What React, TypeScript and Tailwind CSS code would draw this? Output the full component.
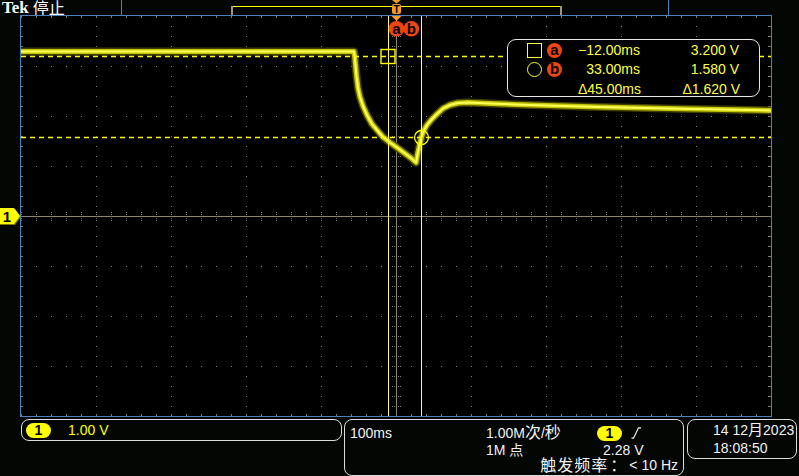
import React from "react";

const GRID = "#857c68";

const wave: [number, number][] = [
  [21, 51.5], [354, 51.5], [354.8, 58], [355.6, 66], [356.5, 76], [358, 88], [360, 97],
  [363, 106], [367, 115], [372, 124], [377, 130], [383, 137], [390, 142.5], [397, 147.5],
  [405, 153.5], [411, 158], [416, 162.5], [418, 152], [420, 143], [421.5, 137], [423.5, 131],
  [427, 125], [432, 119], [437, 114], [443, 108.5], [450, 105], [458, 103], [468, 102.5],
  [490, 103.5], [530, 105], [600, 107], [680, 108.8], [771, 110.5],
];

function PlotSvg() {
  const vx = [-4, -3, -2, -1, 1, 2, 3, 4].map((k) => Math.round(396 + 75.1 * k) + 0.5);
  const hy = [-3, -2, -1, 1, 2, 3].map((k) => Math.round(216 + 50.1 * k) + 0.5);
  const d = "M" + wave.map((p) => p.join(" ")).join(" L");
  const topTicks: number[] = [];
  for (let x = 21; x <= 770; x += 15) topTicks.push(x + 0.5);
  const sideTicks: number[] = [];
  for (let y = 26; y <= 410; y += 10) sideTicks.push(y + 0.5);
  return (
    <svg width={750} height={400} viewBox="21 16 750 400" className="block">
      {vx.map((x) => (
        <line key={"v" + x} x1={x} x2={x} y1={16} y2={416} stroke={GRID} strokeDasharray="1 9" />
      ))}
      {hy.map((y) => (
        <line key={"h" + y} x1={21} x2={771} y1={y} y2={y} stroke={GRID} strokeDasharray="1 14" />
      ))}
      <line x1={21} x2={771} y1={216.5} y2={216.5} stroke="#8f866f" />
      <line x1={396.5} x2={396.5} y1={16} y2={416} stroke="#8f866f" />
      {topTicks.map((x) => (
        <g key={"t" + x}>
          <line x1={x} x2={x} y1={16} y2={18} stroke={GRID} />
          <line x1={x} x2={x} y1={414} y2={416} stroke={GRID} />
          <line x1={x} x2={x} y1={212} y2={221} stroke={GRID} strokeDasharray="1 1" />
        </g>
      ))}
      {sideTicks.map((y) => (
        <g key={"s" + y}>
          <line x1={21} x2={23} y1={y} y2={y} stroke={GRID} />
          <line x1={768} x2={771} y1={y} y2={y} stroke={GRID} />
          <line x1={392} x2={401} y1={y} y2={y} stroke={GRID} strokeDasharray="1 1" />
        </g>
      ))}
      <path d={d} fill="none" stroke="#4a4a00" strokeWidth={8} strokeLinejoin="round" opacity={0.85} />
      <path d={d} fill="none" stroke="#c4c400" strokeWidth={5} strokeLinejoin="round" />
      <path d={d} fill="none" stroke="#ffff5c" strokeWidth={2} strokeLinejoin="round" />
      <line x1={21} x2={771} y1={56.5} y2={56.5} stroke="#ffff00" strokeWidth={1.3} strokeDasharray="5 4" />
      <line x1={21} x2={771} y1={137.5} y2={137.5} stroke="#ffff00" strokeWidth={1.3} strokeDasharray="5 4" />
      <line x1={388.5} x2={388.5} y1={16} y2={416} stroke="#ffff66" />
      <line x1={421.5} x2={421.5} y1={16} y2={416} stroke="#ffff66" />
      <rect x={381} y={49.5} width={14} height={14} fill="none" stroke="#ffff00" strokeWidth={1.4} />
      <circle cx={421.5} cy={137.5} r={7} fill="none" stroke="#ffff00" strokeWidth={1.3} />
    </svg>
  );
}

function OrangeDot({ ch }: { ch: string }) {
  return (
    <div className="w-[15px] h-[15px] rounded-full bg-[#f2440f] text-black font-bold text-[15px] leading-[14px] text-center">
      {ch}
    </div>
  );
}

function Readout() {
  return (
    <div className="absolute left-[486px] top-[23px] w-[253px] h-[58px] rounded-[9px] border border-[#e8e8e8] bg-black text-[#ffff40] text-[14px]">
      <div className="pt-[1px]">
        <div className="flex items-center h-[18px]">
          <div className="ml-[19px] w-[15px] h-[15px] border-[1.5px] border-[#ffff40]" />
          <div className="ml-[5px]"><OrangeDot ch="a" /></div>
          <div className="w-[78px] text-right">−12.00ms</div>
          <div className="w-[99px] text-right">3.200 V</div>
        </div>
        <div className="flex items-center h-[20px]">
          <div className="ml-[19px] w-[15px] h-[15px] rounded-full border-[1.5px] border-[#ffff40]" />
          <div className="ml-[5px]"><OrangeDot ch="b" /></div>
          <div className="w-[78px] text-right">33.00ms</div>
          <div className="w-[99px] text-right">1.580 V</div>
        </div>
        <div className="flex items-center h-[20px]">
          <div className="ml-[51px] w-[82px] text-right">Δ45.00ms</div>
          <div className="w-[99px] text-right">Δ1.620 V</div>
        </div>
      </div>
    </div>
  );
}

function Pill() {
  return (
    <div className="w-[25px] h-[15px] rounded-full bg-[#ffff00] text-black font-bold text-[14px] leading-[15px] text-center">
      1
    </div>
  );
}

export default function App() {
  return (
    <div className="w-[799px] h-[476px] bg-[#030603] overflow-hidden relative [font-family:'Liberation_Sans','Noto_Sans_CJK_SC',sans-serif] text-[14px]">
      {/* top bar */}
      <div className="h-[15px] flex items-start">
        <div className="w-[121px] h-[15px] flex items-start text-white">
          <span className="ml-[2px] text-[17px] font-bold leading-[15px] [font-family:'Liberation_Serif',serif]">Tek</span>
          <span className="ml-[4px] text-[16px] leading-[14px] [font-family:'Noto_Sans_CJK_SC',sans-serif]">停止</span>
        </div>
        <div className="w-[548px] h-[15px] border-x border-[#4b82bd]">
          <div className="ml-[109px] w-[331px] h-[14px] border-x-2 border-[#a39677]">
            <div className="mt-[6px] h-px bg-[#ffff00]" />
          </div>
        </div>
      </div>

      {/* middle */}
      <div className="flex h-[402px]">
        <div className="w-[20px] relative">
          <svg className="absolute left-0 top-[193px]" width={21} height={18} viewBox="0 0 21 18">
            <polygon points="0,1 15,1 21,9 15,17 0,17" fill="#7a7a00" />
            <polygon points="0,0 14,0 20,8 14,16 0,16" fill="#ffff00" />
            <text x={7} y={13.5} textAnchor="middle" fontSize={15} fontWeight={700} fill="#000" fontFamily="Liberation Sans, sans-serif">1</text>
          </svg>
        </div>
        <div className="w-[752px] h-[402px] border border-[#4b82bd] bg-black relative">
          <PlotSvg />
          <Readout />
        </div>
      </div>

      {/* trigger + cursor markers overlay */}
      <svg className="absolute left-[380px] top-0" width={45} height={40} viewBox="380 0 45 40">
        <polygon points="392,0 401,0 396.5,3.5" fill="#f59a23" />
        <rect x={392} y={4} width={9} height={10} rx={2} fill="#f59a23" />
        <text x={396.5} y={12.5} textAnchor="middle" fontSize={10} fontWeight={700} fill="#000" fontFamily="Liberation Sans, sans-serif">T</text>
        <polygon points="391.5,16 401.5,16 396.5,21" fill="#f59a23" />
        <circle cx={396.5} cy={28.8} r={7.8} fill="#f2440f" />
        <circle cx={411.3} cy={28.8} r={7.8} fill="#f2440f" />
        <text x={396.5} y={33.5} textAnchor="middle" fontSize={15} fontWeight={700} fill="#000" fontFamily="Liberation Sans, sans-serif">a</text>
        <text x={411.3} y={34} textAnchor="middle" fontSize={15} fontWeight={700} fill="#000" fontFamily="Liberation Sans, sans-serif">b</text>
      </svg>

      {/* bottom bar */}
      <div className="flex items-start pt-[2px] h-[57px]">
        <div className="ml-[21px] w-[321px] h-[22px] rounded-[8px] border border-[#dcdcdc] flex items-center">
          <div className="ml-[4px]"><Pill /></div>
          <span className="ml-[17px] text-[#ffff00]">1.00 V</span>
        </div>
        <div className="ml-[2px] w-[340px] h-[57px] rounded-[8px] border border-[#dcdcdc] text-[#f2f2f2] pt-[1px]">
          <div className="grid grid-cols-[141px_111px_1fr] h-[19px] items-center">
            <span className="pl-[5px]">100ms</span>
            <span>1.00M<span className="text-[16px]">次</span>/<span className="text-[16px]">秒</span></span>
            <div className="flex items-center">
              <Pill />
              <svg className="ml-[9px]" width={11} height={12} viewBox="0 0 11 12">
                <path d="M0.5 11.2 H2.5 L7.5 0.8 H10" fill="none" stroke="#f2f2f2" strokeWidth={1.2} />
              </svg>
            </div>
          </div>
          <div className="grid grid-cols-[141px_111px_1fr] h-[16px] items-center">
            <span />
            <span>1M 点</span>
            <span className="pl-[6px]">2.28 V</span>
          </div>
          <div className="h-[19px] flex items-center justify-end pr-[5px]">
            <span className="text-[16px] tracking-[1px]">触发频率</span>
            <span className="ml-[2px] text-[16px]">：</span>
            <span className="ml-[3px]">&lt; 10 Hz</span>
          </div>
        </div>
        <div className="ml-[3px] w-[110px] h-[40px] rounded-[8px] border border-[#dcdcdc] text-[#f2f2f2] pt-[1px]">
          <div className="pl-[25px] h-[19px] flex items-center">14 12<span className="text-[15px]">月</span>2023</div>
          <div className="pl-[25px] h-[17px] flex items-center">18:08:50</div>
        </div>
      </div>
    </div>
  );
}
